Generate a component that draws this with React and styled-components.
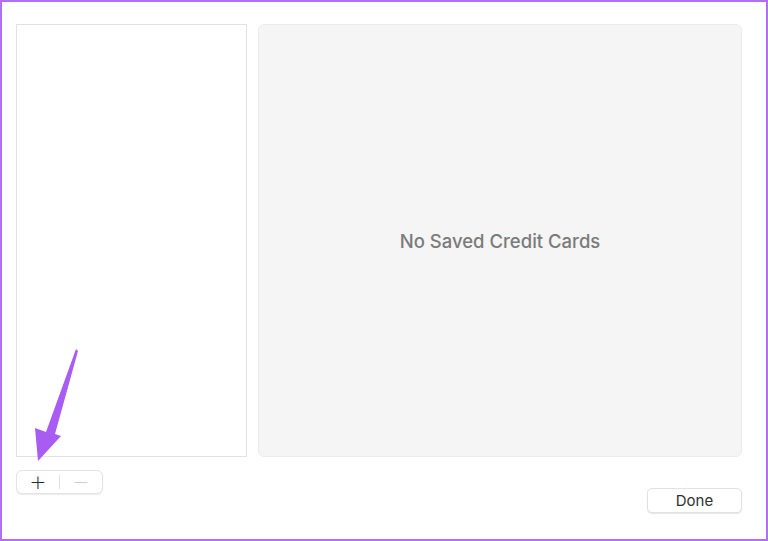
import React from 'react';
import styled, { createGlobalStyle } from 'styled-components';

const GlobalStyle = createGlobalStyle`
  html, body {
    margin: 0;
    padding: 0;
    background: #fff;
  }
  * {
    box-sizing: border-box;
  }
`;

const App = () => {
  return (
    <>
      <GlobalStyle />
      <Frame>
        <Panels>
          <ListPanel />
          <DetailPanel>
            <EmptyText>No Saved Credit Cards</EmptyText>
          </DetailPanel>
        </Panels>
        <Footer>
          <Segmented>
            <SegButton>+</SegButton>
            <SegDivider />
            <SegButton $disabled>−</SegButton>
          </Segmented>
          <DoneButton>Done</DoneButton>
        </Footer>
        <Arrow width="60" height="125" viewBox="0 0 60 125">
          <path d="M46 3 L48 5 L25 88 L31 90 L8 115 L5 82 L16 86 Z" fill="#a95cf2" />
        </Arrow>
      </Frame>
    </>
  );
};

const Frame = styled.div`
  position: relative;
  width: 768px;
  height: 541px;
  border: 2px solid #b46ef5;
  padding: 22px 24px 0 14px;
  display: flex;
  flex-direction: column;
  font-family: Inter, 'Liberation Sans', Arial, sans-serif;
`;

const Panels = styled.div`
  display: flex;
  gap: 11px;
  height: 433px;
`;

const ListPanel = styled.div`
  width: 231px;
  background: #fff;
  border: 1px solid #e2e2e2;
`;

const DetailPanel = styled.div`
  flex: 1;
  background: #f5f5f5;
  border: 1px solid #ebebeb;
  border-radius: 6px;
  display: flex;
  align-items: center;
  justify-content: center;
`;

const EmptyText = styled.span`
  font-size: 18.5px;
  font-weight: 500;
  color: #7b7b7b;
  padding-top: 1px;
`;

const Footer = styled.div`
  display: flex;
  align-items: flex-start;
  padding-top: 13px;
`;

const Segmented = styled.div`
  display: flex;
  align-items: center;
  width: 87px;
  height: 24px;
  background: #fff;
  border: 1px solid #e4e4e4;
  border-radius: 6px;
  box-shadow: 0 1px 1px rgba(0, 0, 0, 0.08);
`;

const SegButton = styled.div`
  flex: 1;
  text-align: center;
  font-family: 'DejaVu Sans', sans-serif;
  font-size: 20px;
  line-height: 22px;
  font-weight: 200;
  color: ${(p) => (p.$disabled ? '#c4c4c4' : '#2a2a2a')};
`;

const SegDivider = styled.div`
  width: 1px;
  height: 14px;
  background: #e0e0e0;
`;

const DoneButton = styled.div`
  margin-left: auto;
  margin-top: 18px;
  width: 95px;
  height: 25px;
  background: #fff;
  border: 1px solid #e2e2e2;
  border-radius: 5px;
  box-shadow: 0 1px 1px rgba(0, 0, 0, 0.1);
  display: flex;
  align-items: center;
  justify-content: center;
  font-size: 15px;
  font-weight: 400;
  color: #303030;
`;

const Arrow = styled.svg`
  position: absolute;
  left: 28px;
  top: 344px;
`;

export default App;
